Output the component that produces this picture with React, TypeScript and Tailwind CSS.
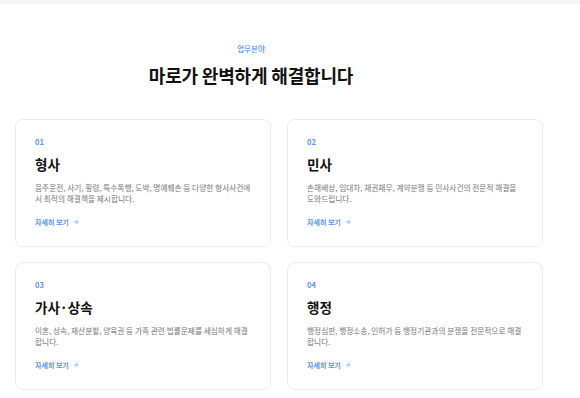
import { ArrowRight } from "lucide-react";

const practices = [
  {
    no: "01",
    title: "형사",
    desc: "음주운전, 사기, 횡령, 특수폭행, 도박, 명예훼손 등 다양한 형사사건에서 최적의 해결책을 제시합니다.",
  },
  {
    no: "02",
    title: "민사",
    desc: "손해배상, 임대차, 채권채무, 계약분쟁 등 민사사건의 전문적 해결을 도와드립니다.",
  },
  {
    no: "03",
    title: "가사·상속",
    desc: "이혼, 상속, 재산분할, 양육권 등 가족 관련 법률문제를 세심하게 해결합니다.",
  },
  {
    no: "04",
    title: "행정",
    desc: "행정심판, 행정소송, 인허가 등 행정기관과의 분쟁을 전문적으로 해결합니다.",
  },
];

const App = () => {
  return (
    <div
      className="min-h-[398px] bg-white"
      style={{ fontFamily: '"Noto Sans CJK KR", "Noto Sans", sans-serif' }}
    >
      {/* top strip */}
      <div className="h-[4px] bg-[#f4f4f5]" />

      {/* heading */}
      <div className="pr-[78px] pt-[39px] text-center">
        <p className="text-[7.5px] leading-[12px] font-medium text-[#5b93f5]">업무분야</p>
        <h2 className="mt-[8px] text-[18px] leading-[24px] font-bold tracking-[-0.01em] text-[#111]">
          마로가 완벽하게 해결합니다
        </h2>
      </div>

      {/* cards */}
      <div className="grid grid-cols-2 gap-x-4 gap-y-[15px] pl-[15px] pr-[37px] pt-[32px] pb-[8px]">
        {practices.map((item) => (
          <div
            key={item.no}
            className="h-[128px] rounded-[8px] border border-[#ececec] bg-white px-[19px] pt-[17px]"
          >
            <p className="text-[7.5px] leading-[10px] font-semibold text-[#5b93f5]">{item.no}</p>
            <h3 className="mt-[8px] text-[13.5px] leading-[18px] font-bold text-[#111]">{item.title}</h3>
            <p className="mt-[9px] text-[7.7px] leading-[11px] text-[#777]">{item.desc}</p>
            <a className="mt-[13px] flex items-center text-[7px] leading-[10px] font-semibold text-[#5b93f5]">
              자세히 보기 <ArrowRight className="ml-[4px] h-[6px] w-[6px]" strokeWidth={2.5} />
            </a>
          </div>
        ))}
      </div>
    </div>
  );
};

export default App;
